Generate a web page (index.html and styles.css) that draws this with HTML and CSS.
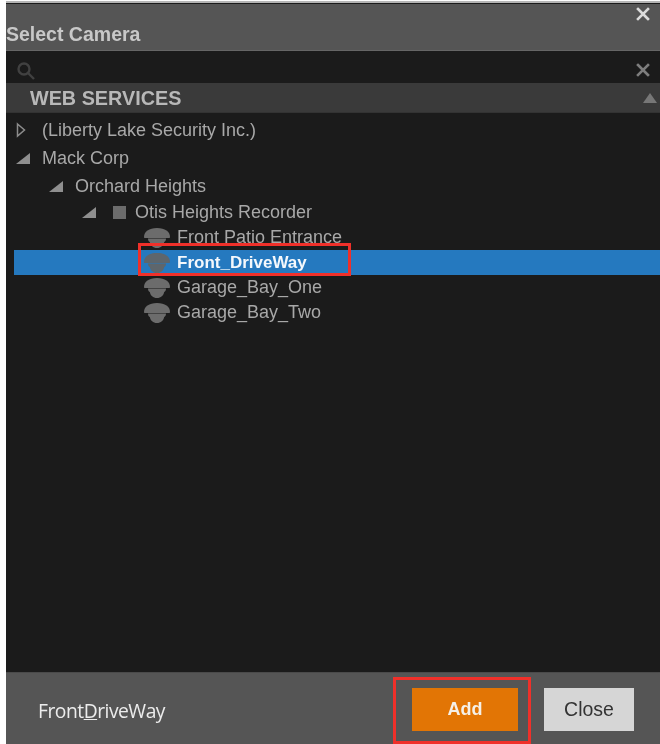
FILE: index.html
```html
<!DOCTYPE html>
<html lang="en">
<head>
<meta charset="utf-8">
<title>Select Camera</title>
<link rel="stylesheet" href="styles.css">
</head>
<body>
<svg class="defs" width="0" height="0" aria-hidden="true">
  <symbol id="cam" viewBox="0 0 26 20">
    <path d="M0 9C0 3.500 5 0 13 0s13 3.500 13 9c0 .6-.4 1-1 1H1c-.6 0-1-.4-1-1z"/>
    <path d="M4 10.500h18c0 1.800-.6 3-1.800 3.500C19.500 17.500 17 20 13 20s-6.500-2.500-7.200-6C4.600 13.500 4 12.300 4 10.500z"/>
  </symbol>
</svg>
<main class="dialog">
  <header class="title">
    <h1>Select Camera</h1>
    <svg class="x x-title" viewBox="0 0 14 14"><path d="M2 2l10 10M12 2L2 12"/></svg>
  </header>
  <div class="search">
    <svg class="glass" viewBox="0 0 20 20"><circle cx="8" cy="8" r="5.500"/><path d="M12 12l6 6"/></svg>
    <svg class="x x-search" viewBox="0 0 14 14"><path d="M2 2l10 10M12 2L2 12"/></svg>
  </div>
  <div class="section">
    <span>WEB SERVICES</span>
    <i class="collapse"></i>
  </div>
  <ul class="tree">
    <li class="row tall l0"><svg class="open-arrow" viewBox="0 0 10 16"><path d="M1.500 2l7 6-7 6z"/></svg><span class="gap-a">(Liberty Lake Security Inc.)</span></li>
    <li class="row tall l0"><i class="corner"></i><span class="gap-a">Mack Corp</span></li>
    <li class="row tall l1"><i class="corner"></i><span class="gap-a">Orchard Heights</span></li>
    <li class="row l2"><i class="corner"></i><i class="square"></i><span class="gap-b">Otis Heights Recorder</span></li>
    <li class="row l3"><svg class="cam"><use href="#cam"/></svg><span>Front Patio Entrance</span></li>
    <li class="row l3 selected"><svg class="cam"><use href="#cam"/></svg><span>Front_DriveWay</span><b class="mark mark-row"></b></li>
    <li class="row l3"><svg class="cam"><use href="#cam"/></svg><span>Garage_Bay_One</span></li>
    <li class="row l3"><svg class="cam"><use href="#cam"/></svg><span>Garage_Bay_Two</span></li>
  </ul>
  <footer class="foot">
    <span class="name">Front<u>D</u>riveWay</span>
    <div class="actions">
      <button class="btn add">Add</button>
      <button class="btn close">Close</button>
      <b class="mark mark-add"></b>
    </div>
  </footer>
</main>
</body>
</html>
```
FILE: styles.css
```css
* { box-sizing: border-box; }
html, body { margin: 0; height: 100%; background: #fff; }
body { font-family: "Liberation Sans", Arial, sans-serif; overflow: hidden; }
.defs { position: absolute; }
.dialog {
  height: 744px;
  margin-left: 6px;
  padding-top: 3px;
  display: flex;
  flex-direction: column;
  background: #1b1b1b;
  border-top: 1px solid #fff;
  box-shadow: inset 0 2px 0 #b5b5b5;
  filter: blur(0.6px);
  overflow: hidden;
}
.title {
  height: 47px;
  flex: none;
  background: #555;
  border-bottom: 1px solid #666;
  display: flex;
  align-items: flex-end;
  justify-content: space-between;
  position: relative;
}
.title h1 {
  margin: 0 0 4px;
  font-size: 19.500px;
  line-height: 24px;
  font-weight: 700;
  color: #c8c8c8;
}
.x { fill: none; stroke-linecap: square; }
.x-title { position: absolute; right: 10px; top: 3px; width: 14px; height: 14px; stroke: #dcdcdc; stroke-width: 2.600; }
.search {
  height: 32px;
  flex: none;
  display: flex;
  align-items: flex-end;
  justify-content: space-between;
  padding: 0 10px 2px 10px;
}
.glass { width: 20px; height: 20px; fill: none; stroke: #414141; stroke-width: 2.400; }
.x-search { width: 14px; height: 14px; margin-bottom: 4px; stroke: #7e7e7e; stroke-width: 2.600; }
.section {
  height: 30px;
  flex: none;
  background: #3a3a3a;
  display: flex;
  align-items: center;
  justify-content: space-between;
  padding: 1px 3px 0 24px;
  font-size: 19.800px;
  font-weight: 700;
  color: #b8b8b8;
  border-bottom: 1px solid #333;
}
.collapse {
  width: 0; height: 0;
  border-left: 7px solid transparent;
  border-right: 7px solid transparent;
  border-bottom: 10px solid #777;
}
.tree {
  list-style: none;
  margin: 0;
  padding: 3px 0 0;
  flex: 1;
  font-size: 18px;
  color: #a8a8a8;
}
.row { height: 25px; display: flex; align-items: center; position: relative; }
.tall { height: 28px; }
.l0 { padding-left: 10px; }
.l1 { padding-left: 43px; }
.l2 { padding-left: 76px; }
.l3 { padding-left: 138px; }
.gap-a { margin-left: 12px; }
.gap-b { margin-left: 9px; }
.open-arrow { width: 10px; height: 16px; margin-right: 4px; fill: none; stroke: #8c8c8c; stroke-width: 1.500; }
.corner {
  width: 0; height: 0;
  border-left: 14px solid transparent;
  border-bottom: 11px solid #8f8f8f;
}
.square { width: 13px; height: 13px; margin-left: 17px; background: #6c6c6c; }
.cam { width: 26px; height: 20px; margin-right: 7px; fill: #6c6c6c; flex: none; }
.selected { margin-left: 8px; padding-left: 130px; background: #2579bf; color: #f4f8fc; font-weight: 700; font-size: 17px; }
.selected .cam { fill: #5e666c; }
.mark { position: absolute; border: 3px solid #f0302a; pointer-events: none; }
.mark-row { left: 124px; top: -7px; width: 213px; height: 33px; }
.foot {
  height: 72px;
  flex: none;
  background: #555;
  border-top: 1px solid #4a4a4a;
  display: flex;
  align-items: center;
  justify-content: space-between;
  padding: 0 26px 0 32px;
}
.name { font-family: "Open Sans", "Noto Sans", sans-serif; font-size: 19.300px; letter-spacing: -0.5px; color: #ececec; margin-top: 4px; }
.actions { display: flex; gap: 26px; margin-top: 1px; position: relative; }
.btn { border: 0; height: 43px; padding: 0; font: 700 18px "Liberation Sans", Arial, sans-serif; }
.add { width: 106px; background: #e27505; color: #f5f0e8; }
.close { width: 90px; background: #d6d6d6; color: #333; font-weight: 400; font-size: 19.500px; }
.mark-add { left: -19px; top: -11px; width: 138px; height: 67px; }
```
